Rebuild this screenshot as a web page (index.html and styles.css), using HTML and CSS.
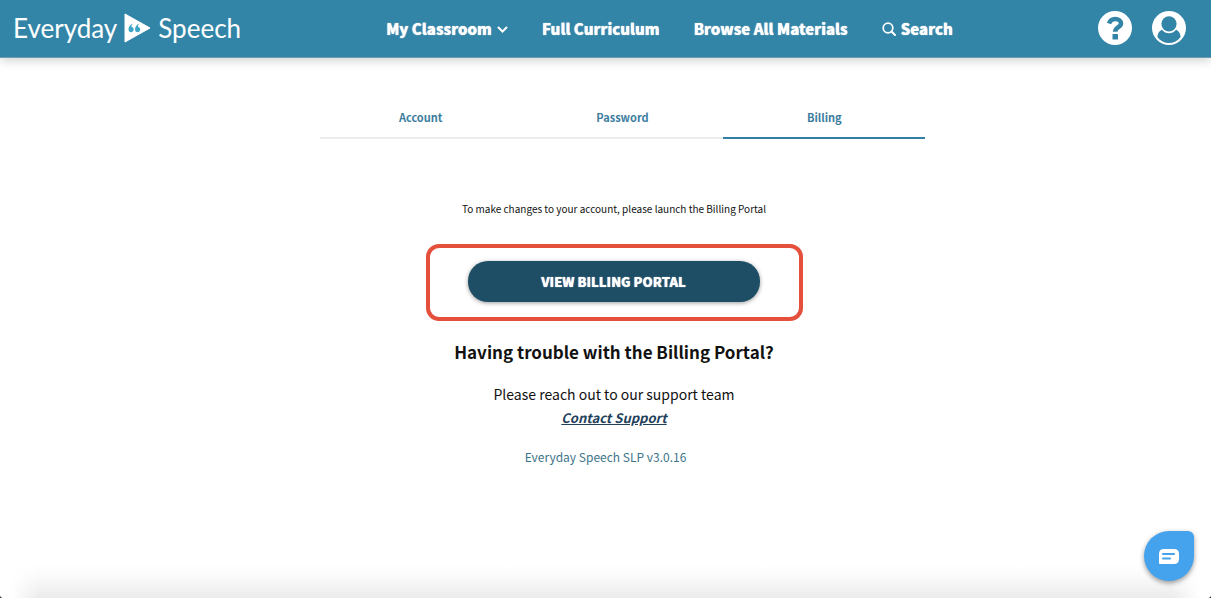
FILE: index.html
```html
<!DOCTYPE html>
<html lang="en">
<head>
    <meta charset="UTF-8">
    <meta name="viewport" content="width=device-width, initial-scale=1.0">
    <title>Everyday Speech - Billing</title>
    <link rel="stylesheet" href="styles.css">
</head>
<body>
    <div class="page">
        <header class="header">
            <a class="logo" href="#">
                <span>Everyday</span>
                <svg class="logo-mark" viewBox="0 0 27 30" aria-hidden="true">
                    <path d="M1 1 L26 15 L1 29 Z" fill="#fff" stroke="#fff" stroke-width="1" stroke-linejoin="round"/>
                    <path d="M9 10.500 C5.500 12 4.500 14.500 4.500 16.500 A2.600 2.600 0 1 0 7.500 14 C7.300 12.800 8 11.500 9 10.500 Z M15.500 10.500 C12 12 11 14.500 11 16.500 A2.600 2.600 0 1 0 14 14 C13.800 12.800 14.500 11.500 15.500 10.500 Z" fill="#3da5c6"/>
                </svg>
                <span>Speech</span>
            </a>

            <nav class="nav">
                <a href="#">My Classroom
                    <svg class="chevron" viewBox="0 0 11 11" aria-hidden="true"><path d="M1.500 4.500 L5.500 8.500 L9.500 4.500" fill="none" stroke="#fff" stroke-width="2" stroke-linecap="round"/></svg>
                </a>
                <a href="#">Full Curriculum</a>
                <a href="#">Browse All Materials</a>
                <a href="#">
                    <svg class="search-icon" viewBox="0 0 14 14" aria-hidden="true"><circle cx="6" cy="6" r="4.800" fill="none" stroke="#fff" stroke-width="1.700"/><path d="M9.500 9.500 L13 13" stroke="#fff" stroke-width="2" stroke-linecap="round"/></svg>
                    Search</a>
            </nav>

            <div class="actions">
                <button class="icon-btn" aria-label="Help">
                    <svg viewBox="0 0 34 34" aria-hidden="true">
                        <circle cx="17" cy="17" r="17" fill="#fff"/>
                        <path d="M11 12.500 C12 9.500 14.300 8 17.300 8 C20.500 8 23 9.800 23 12.500 C23 16.500 17.200 16 17.200 20.800" fill="none" stroke="#3385a7" stroke-width="4.500"/>
                        <rect x="14.500" y="23" width="5.500" height="5.500" rx="0.500" fill="#3385a7"/>
                    </svg>
                </button>
                <button class="icon-btn" aria-label="My profile">
                    <svg viewBox="0 0 34 34" aria-hidden="true">
                        <circle cx="17" cy="17" r="17" fill="#fff"/>
                        <circle cx="17" cy="12.800" r="7.600" fill="#3385a7"/>
                        <path d="M9.800 18.800 C12 21.300 14.300 22.300 17 22.300 C19.700 22.300 22 21.300 24.200 18.800 C27 20 28.300 22.500 28.600 26 C25.500 30 21.500 32 17 32 C12.500 32 8.500 30 5.400 26 C5.700 22.500 7 20 9.800 18.800 Z" fill="#3385a7"/>
                    </svg>
                </button>
            </div>
        </header>

        <main class="main">
            <nav class="tabs">
                <a href="#">Account</a>
                <a href="#">Password</a>
                <a class="active" href="#">Billing</a>
            </nav>

            <section class="billing">
                <p class="note">To make changes to your account, please launch the Billing Portal</p>
                <div class="highlight">
                    <button class="portal-btn">VIEW BILLING PORTAL</button>
                </div>
                <h1>Having trouble with the Billing Portal?</h1>
                <p class="support">Please reach out to our support team</p>
                <a class="contact" href="#">Contact Support</a>
            </section>

            <p class="version">Everyday Speech SLP v3.0.16</p>
        </main>

        <div class="bottom-shade"></div>
    </div>

    <button class="chat-btn" aria-label="Open chat">
        <svg viewBox="0 0 20 15" aria-hidden="true">
            <path d="M5 0 H15 Q20 0 20 5 V10 Q20 15 15 15 H1 Q0 15 0 14 V5 Q0 0 5 0 Z" fill="#fff"/>
            <path d="M4 5 H15 M4 9.500 H11" stroke="#45a2ec" stroke-width="2" stroke-linecap="round"/>
        </svg>
    </button>
</body>
</html>
```
FILE: styles.css
```css
* {
    box-sizing: border-box;
}
html {
    background: #15152b;
}
body {
    margin: 0;
    font-family: "Noto Sans CJK SC", "Open Sans", sans-serif;
    color: #111;
}
a {
    text-decoration: none;
}
p, h1 {
    margin: 0;
}
button {
    border: none;
    padding: 0;
    font-family: inherit;
    cursor: pointer;
}
.page {
    display: flex;
    flex-direction: column;
    min-height: 100vh;
    background: #fff;
    border-radius: 0 0 3px 3px;
}
.header {
    display: flex;
    align-items: center;
    justify-content: space-between;
    height: 58px;
    padding: 0 25px 1px 13px;
    background: #3385a7;
    border-bottom: 1px solid #6f9db0;
    box-shadow: 0 2px 10px rgba(0, 0, 0, 0.2);
}
.logo {
    display: flex;
    align-items: center;
    gap: 7px;
    color: #fff;
    font-family: Lato, sans-serif;
    font-size: 26px;
    line-height: 28px;
}
.logo-mark {
    width: 27px;
    height: 30px;
}
.nav {
    display: flex;
    gap: 34px;
    padding-top: 1px;
}
.nav a {
    display: flex;
    align-items: center;
    gap: 5px;
    color: #fff;
    font-size: 15px;
    font-weight: 900;
    line-height: 24px;
    text-shadow: 0 0 1px #fff;
}
.chevron {
    width: 11px;
    height: 11px;
}
.search-icon {
    width: 14px;
    height: 14px;
}
.actions {
    display: flex;
    gap: 20px;
}
.icon-btn {
    width: 34px;
    height: 34px;
    background: none;
}
.icon-btn svg {
    display: block;
}
.main {
    flex: 1;
    text-align: center;
}
.tabs {
    display: flex;
    width: 50%;
    margin: 0 auto;
    padding-top: 40px;
    position: relative;
    left: 17px;
}
.tabs a {
    flex: 1;
    padding: 11px 0 12px;
    border-bottom: 2px solid #ececec;
    color: #3d7e9f;
    font-size: 11px;
    font-weight: 700;
    line-height: 16px;
}
.tabs .active {
    border-bottom-color: #3380a5;
}
.billing {
    display: flex;
    flex-direction: column;
    align-items: center;
    padding: 61px 0 0 17px;
}
.note {
    font-size: 10px;
    line-height: 18px;
}
.highlight {
    width: 377px;
    max-width: 100%;
    margin: 26px 0 19px;
    padding: 13px 39px 15px 38px;
    border: 4px solid #e5503c;
    border-radius: 13px;
}
.portal-btn {
    display: block;
    width: 100%;
    height: 41px;
    border-radius: 20px;
    background: #1d4e66;
    box-shadow: 0 1px 4px rgba(0, 0, 0, 0.4);
    color: #fff;
    font-size: 13px;
    font-weight: 900;
    text-shadow: 0 0 1px #fff;
}
.billing h1 {
    font-size: 17px;
    font-weight: 700;
    line-height: 24px;
}
.support {
    margin-top: 18px;
    font-size: 14px;
    line-height: 24px;
}
.contact {
    color: #24415c;
    font-size: 13px;
    font-style: italic;
    font-weight: 700;
    line-height: 24px;
    text-decoration: underline;
}
.version {
    margin-top: 17px;
    color: #3d7489;
    font-size: 12px;
    line-height: 20px;
}
.bottom-shade {
    height: 34px;
    background: linear-gradient(to bottom, #fff, #fafafa 40%, #ebebeb);
    mask-image: linear-gradient(to right, transparent 10px, #000 40px, #000 calc(100% - 40px), transparent calc(100% - 10px));
}
.chat-btn {
    position: fixed;
    right: 17px;
    bottom: 17px;
    display: flex;
    align-items: center;
    justify-content: center;
    width: 50px;
    height: 50px;
    border-radius: 25px 6px 25px 25px;
    background: #45a2ec;
    box-shadow: 0 2px 5px rgba(0, 0, 0, 0.4);
}
.chat-btn svg {
    width: 20px;
    height: 15px;
}
```
